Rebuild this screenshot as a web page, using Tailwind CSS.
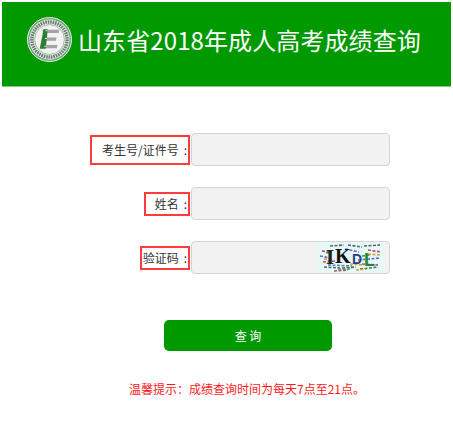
<!DOCTYPE html>
<html lang="zh-CN">
  <head>
    <meta charset="UTF-8" />
    <meta name="viewport" content="width=device-width, initial-scale=1.0" />
    <title>山东省2018年成人高考成绩查询</title>
    <script src="https://cdn.jsdelivr.net/npm/@tailwindcss/browser@4"></script>
  </head>
  <body class="bg-white font-['Noto_Sans_CJK_SC',sans-serif] overflow-hidden">
    <div class="w-[453px] h-[425px] pt-[2px] px-[2px]">
      <!-- Header -->
      <header class="h-[85px] w-[449px] bg-[#009900] border-b border-[#80cc80] flex items-center pl-[25px] pb-[9px]">
        <svg class="w-[45px] h-[45px] shrink-0" viewBox="0 0 46 46">
          <circle cx="23" cy="23" r="22.5" fill="#6f9f78" stroke="#eef4ee" stroke-width="1" />
          <circle cx="23" cy="23" r="20.6" fill="#e8eee8" />
          <circle cx="23" cy="23" r="18" fill="none" stroke="#42624a" stroke-width="3.6" stroke-dasharray="1.6 0.9" opacity="0.8" />
          <circle cx="23" cy="23" r="15.2" fill="#f3f3f3" stroke="#86a08b" stroke-width="0.7" />
          <path d="M16 13h17l-0.6 3.4H16z M15.4 21h14.8l-0.6 3.4H15z M14.6 28.6h16.6l-0.6 3.4H14z" fill="#a3a3a3" />
          <path d="M17 12.6h4.2l-2 19.8H13z" fill="#2e7d34" />
          <path d="M19 14h2M18.4 22h2M17.6 30h2" stroke="#dfe8df" stroke-width="1" />
        </svg>
        <h1 class="ml-[6px] text-[24px] leading-none tracking-[0.1px] text-white whitespace-nowrap">山东省2018年成人高考成绩查询</h1>
      </header>

      <!-- Form -->
      <form class="mt-[46px] w-[388px] flex flex-col gap-[21px]">
        <div class="flex items-center justify-end">
          <label for="examNo" class="h-[30px] pl-[10px] pr-[1px] border-2 border-[#ff3b3b] flex items-center text-[12px] text-[#333] whitespace-nowrap">考生号/证件号<span class="ml-[5px]">:</span></label>
          <input id="examNo" type="text" class="w-[199px] h-[33px] ml-px bg-[#f2f2f2] border border-[#d4d4d4] rounded-[4px]" />
        </div>
        <div class="flex items-center justify-end">
          <label for="name" class="h-[24px] pl-[9px] pr-[1px] border-2 border-[#ff3b3b] flex items-center text-[12px] text-[#333] whitespace-nowrap">姓名<span class="ml-[5px]">:</span></label>
          <input id="name" type="text" class="w-[199px] h-[33px] ml-px bg-[#f2f2f2] border border-[#d4d4d4] rounded-[4px]" />
        </div>
        <div class="flex items-center justify-end">
          <label for="code" class="h-[24px] pl-[1px] pr-[1px] border-2 border-[#ff3b3b] flex items-center text-[12px] text-[#333] whitespace-nowrap">验证码<span class="ml-[5px]">:</span></label>
          <div class="relative ml-px">
            <input id="code" type="text" class="block w-[199px] h-[33px] bg-[#f2f2f2] border border-[#d4d4d4] rounded-[4px]" />
            <svg class="absolute right-[7px] top-[1px] w-[65px] h-[30px]" viewBox="0 0 65 30">
              <rect width="65" height="30" fill="#e6f9f8" />
              <g stroke-width="1.6" fill="none" stroke-dasharray="3 1.5">
                <path d="M12 4l14-1M30 3l14 2M46 4l16-1M6 25l16 1M24 26l14-1M42 27l18-2" stroke="#4f6a58" />
                <path d="M4 9l9 1M50 8l13 2M5 20l12-1M44 22l16 1M16 29l14-1" stroke="#b04a7a" />
                <path d="M2 14l10 2M27 7l14 3M40 18l22-2M10 23l24 1" stroke="#5a76c4" />
                <path d="M6 17l8 1M32 22l14 1M50 12l12 1M38 28l10-1" stroke="#d9a036" />
                <path d="M8 11l6-1M44 14l8-1M20 27l12 0" stroke="#3e9a4c" />
              </g>
              <text x="8" y="22" font-family="Liberation Serif" font-size="21" font-weight="700" fill="#222">I</text>
              <text x="17" y="21" font-family="Liberation Serif" font-size="20" font-weight="700" fill="#111">K</text>
              <text x="34" y="22" font-family="Liberation Sans" font-size="14" font-weight="700" fill="#2a3f8c">D</text>
              <text x="46" y="24" font-family="Liberation Sans" font-size="18" font-weight="700" fill="#1f8a35">L</text>
            </svg>
          </div>
        </div>
      </form>

      <button type="button" class="block mt-[46px] ml-[162px] w-[168px] h-[31px] bg-[#009900] rounded-[5px] text-[12px] text-white">查 询</button>

      <p class="mt-[28px] ml-[127px] text-[12px] leading-[20px] text-[#ff1a1a] whitespace-nowrap">温馨提示：成绩查询时间为每天7点至21点。</p>
    </div>
  </body>
</html>
